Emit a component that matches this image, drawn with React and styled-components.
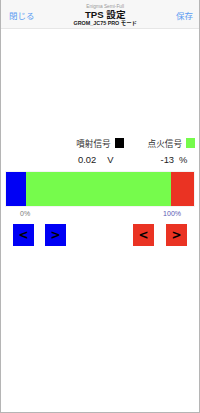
import React from "react";
import styled, { createGlobalStyle } from "styled-components";

const Global = createGlobalStyle`
  html, body { margin: 0; padding: 0; background: #fff; }
  body { font-family: "Liberation Sans", "Noto Sans CJK JP", sans-serif; }
`;

const Page = styled.div`
  width: 200px;
  height: 413px;
  box-sizing: border-box;
  border-left: 1px solid #b5b5b5;
  border-right: 1px solid #b5b5b5;
  border-bottom: 1px solid #b5b5b5;
  display: flex;
  flex-direction: column;
  overflow: hidden;
`;

const Header = styled.div`
  height: 29px;
  background: #f7f7f7;
  border-bottom: 1px solid #e6e6e6;
  display: flex;
  align-items: center;
  justify-content: space-between;
  padding: 0 6px 0 8px;
  box-sizing: border-box;
`;

const NavButton = styled.span`
  font-family: "Noto Sans CJK JP", sans-serif;
  font-size: 8.5px;
  color: #5b9cf2;
  margin-top: 1px;
`;

const Title = styled.div`
  display: flex;
  flex-direction: column;
  align-items: center;
  line-height: 1;
  margin-top: 3px;
`;

const Sub = styled.div`
  font-size: 4.8px;
  color: #9a9a9a;
  margin-bottom: 1px;
`;

const Main = styled.div`
  font-family: "Liberation Sans", "Noto Sans CJK JP", sans-serif;
  font-size: 9.6px;
  font-weight: bold;
  color: #111;
`;

const Mode = styled.div`
  font-family: "Liberation Sans", "Noto Sans CJK JP", sans-serif;
  font-size: 5.4px;
  font-weight: bold;
  color: #222;
  margin-top: 1px;
`;

const Legend = styled.div`
  margin-top: 108px;
  display: flex;
  justify-content: flex-end;
  align-items: center;
  gap: 24px;
  padding-right: 4px;
`;

const LegendItem = styled.div`
  display: flex;
  align-items: center;
  gap: 4px;
`;

const LegendLabel = styled.span`
  font-family: "Noto Sans CJK JP", sans-serif;
  font-size: 8.6px;
  color: #333;
`;

const Swatch = styled.span`
  width: 9px;
  height: 10px;
  background: ${(p) => p.$color};
  display: inline-block;
`;

const Values = styled.div`
  margin-top: 4px;
  display: flex;
  align-items: center;
  padding-left: 77px;
  font-size: 9.4px;
  color: #222;
  height: 12px;
`;

const Val = styled.span`
  margin-left: ${(p) => p.$ml || 0}px;
`;

const Bar = styled.div`
  margin: 6px 4px 0 4px;
  height: 34px;
  display: flex;
  border: 1px solid #f3f3f3;
`;

const Seg = styled.div`
  background: ${(p) => p.$color};
  width: ${(p) => p.$w}px;
  flex: ${(p) => (p.$grow ? 1 : "none")};
`;

const Scale = styled.div`
  display: flex;
  justify-content: space-between;
  padding: 0 18px 0 19px;
  margin-top: 3px;
  font-size: 7px;
  height: 8px;
  line-height: 8px;
`;

const ScaleLabel = styled.span`
  color: ${(p) => p.$color};
`;

const Buttons = styled.div`
  margin-top: 6px;
  display: flex;
  padding: 0 12px 0 12px;
  justify-content: space-between;
`;

const Pair = styled.div`
  display: flex;
  gap: ${(p) => p.$gap}px;
`;

const Btn = styled.div`
  width: 21px;
  height: 22px;
  background: ${(p) => p.$color};
  display: flex;
  align-items: center;
  justify-content: center;
  font-size: 12px;
  font-weight: bold;
  color: #000;
  font-family: "DejaVu Sans", sans-serif;
`;

export default function App() {
  return (
    <>
      <Global />
      <Page>
        <Header>
          <NavButton>閉じる</NavButton>
          <Title>
            <Sub>Enigma Semi-Full</Sub>
            <Main>TPS 設定</Main>
            <Mode>GROM_JC75 PRO モード</Mode>
          </Title>
          <NavButton>保存</NavButton>
        </Header>
        <Legend>
          <LegendItem>
            <LegendLabel>噴射信号</LegendLabel>
            <Swatch $color="#000" />
          </LegendItem>
          <LegendItem>
            <LegendLabel>点火信号</LegendLabel>
            <Swatch $color="#76fb4c" />
          </LegendItem>
        </Legend>
        <Values>
          <Val>0.02</Val>
          <Val $ml={11}>V</Val>
          <Val $ml={47}>-13</Val>
          <Val $ml={5}>%</Val>
        </Values>
        <Bar>
          <Seg $color="#0000f5" $w={20} />
          <Seg $color="#76fb4c" $grow />
          <Seg $color="#ea3323" $w={23} />
        </Bar>
        <Scale>
          <ScaleLabel $color="#7a7a7a">0%</ScaleLabel>
          <ScaleLabel $color="#5959b3">100%</ScaleLabel>
        </Scale>
        <Buttons>
          <Pair $gap={11}>
            <Btn $color="#0000f5">&lt;</Btn>
            <Btn $color="#0000f5">&gt;</Btn>
          </Pair>
          <Pair $gap={12}>
            <Btn $color="#ea3323">&lt;</Btn>
            <Btn $color="#ea3323">&gt;</Btn>
          </Pair>
        </Buttons>
      </Page>
    </>
  );
}
